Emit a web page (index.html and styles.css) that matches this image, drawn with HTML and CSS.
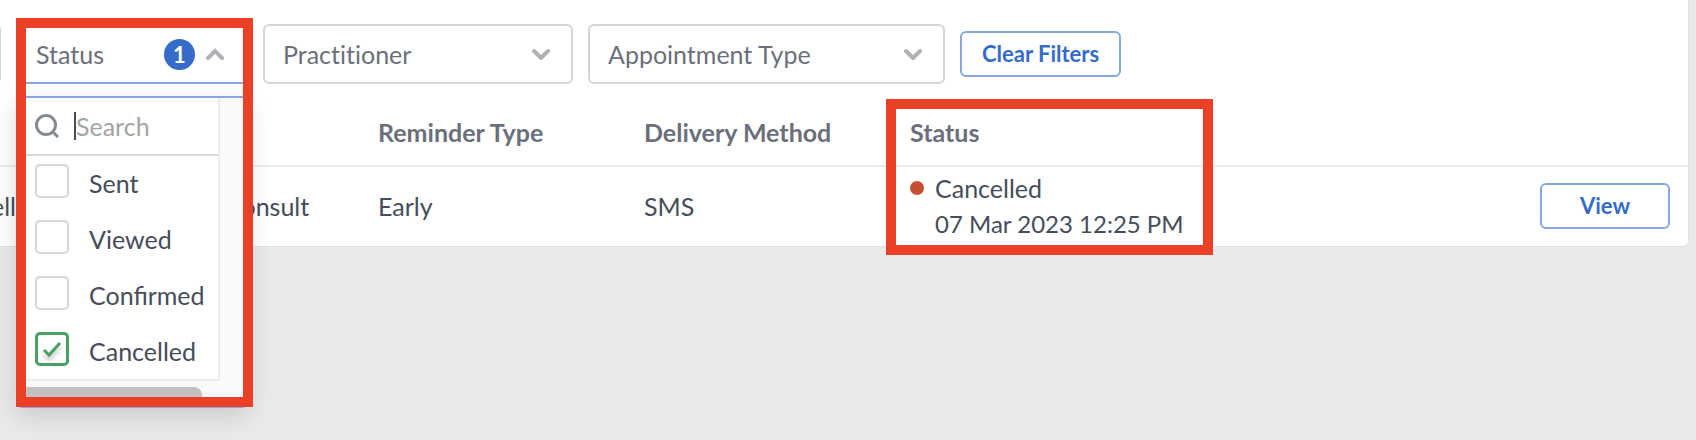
FILE: index.html
```
<!DOCTYPE html>
<html lang="en">
<head>
    <meta charset="UTF-8">
    <meta name="viewport" content="width=device-width, initial-scale=1.0">
    <title>Reminders</title>
    <link rel="stylesheet" href="styles.css">
</head>
<body>
    <main class="card">
        <div class="filters">
            <div class="filter filter-edge"></div>

            <div class="dropdown">
                <button type="button" class="filter filter-open" aria-expanded="true" aria-controls="statusPanel">
                    <span>Status</span>
                    <span class="count">1</span>
                    <svg class="chevron" viewBox="0 0 18 12" aria-hidden="true"><path d="M2 10 L9 3 L16 10"/></svg>
                </button>
                <div class="panel" id="statusPanel">
                    <div class="panel-list">
                        <label class="search">
                            <svg viewBox="0 0 24 24" aria-hidden="true"><circle cx="11" cy="11" r="9.5"/><path d="M18 18 L23 23"/></svg>
                            <input type="text" class="search-input" placeholder="Search">
                        </label>
                        <div class="options">
                            <label class="option"><input type="checkbox"><span>Sent</span></label>
                            <label class="option"><input type="checkbox"><span>Viewed</span></label>
                            <label class="option"><input type="checkbox"><span>Confirmed</span></label>
                            <label class="option">
                                <input type="checkbox" checked>
                                <svg class="tick" viewBox="0 0 34 34" aria-hidden="true"><path d="M9 18 L14 23 L25 11"/></svg>
                                <span>Cancelled</span>
                            </label>
                        </div>
                    </div>
                    <div class="scroll-thumb"></div>
                </div>
            </div>

            <label class="select select-practitioner">
                <select class="filter" aria-label="Practitioner"><option>Practitioner</option></select>
                <svg class="chevron" viewBox="0 0 18 12" aria-hidden="true"><path d="M2 3 L9 10 L16 3"/></svg>
            </label>

            <label class="select select-type">
                <select class="filter" aria-label="Appointment Type"><option>Appointment Type</option></select>
                <svg class="chevron" viewBox="0 0 18 12" aria-hidden="true"><path d="M2 3 L9 10 L16 3"/></svg>
            </label>

            <button type="button" class="btn">Clear Filters</button>
        </div>

        <table class="reminders">
            <colgroup>
                <col class="col-name">
                <col class="col-appointment">
                <col class="col-data">
                <col class="col-data">
                <col class="col-status">
                <col>
            </colgroup>
            <thead>
                <tr>
                    <th></th>
                    <th></th>
                    <th>Reminder Type</th>
                    <th>Delivery Method</th>
                    <th>Status</th>
                    <th></th>
                </tr>
            </thead>
            <tbody>
                <tr>
                    <td class="cut">ell</td>
                    <td>Consult</td>
                    <td>Early</td>
                    <td>SMS</td>
                    <td>
                        <div class="status">
                            <span class="dot"></span>
                            <div>
                                <div>Cancelled</div>
                                <div class="date">07 Mar 2023 12:25 PM</div>
                            </div>
                        </div>
                    </td>
                    <td class="actions"><button type="button" class="btn btn-view">View</button></td>
                </tr>
            </tbody>
        </table>

        <!-- Red callouts over the filter and the status column -->
        <div class="callout callout-filter"></div>
        <div class="callout callout-status"></div>
    </main>
</body>
</html>
```

FILE: styles.css
```
* {
    box-sizing: border-box;
}

body {
    margin: 0;
    min-height: 100vh;
    background: #e9eaec;
    color: #464c59;
    font-family: Lato, sans-serif;
    font-size: 25px;
    line-height: 36px;
}

button, input, select {
    font: inherit;
    color: inherit;
}

.card {
    position: relative;
    margin-right: 7px;
    background: #fff;
    border-right: 1px solid #dfe0e2;
    border-bottom: 1px solid #dfe0e2;
    border-bottom-right-radius: 6px;
}

/* Filters */
.filters {
    display: flex;
    align-items: center;
    gap: 15px;
    padding-top: 24px;
}

.filter {
    display: flex;
    align-items: center;
    width: 100%;
    height: 60px;
    padding: 0 22px 0 18px;
    background: #fff;
    border: 2px solid #d5d6da;
    border-radius: 6px;
    color: #6b6f7b;
    text-align: left;
}

/* Previous filter, only its right side is in view */
.filter-edge {
    width: 40px;
    padding: 0;
    margin-left: -39px;
}

.filter-open {
    border-color: #86a7e0;
}

.dropdown {
    position: relative;
    width: 232px;
}

.count {
    width: 31px;
    height: 31px;
    margin-left: auto;
    margin-right: 11px;
    border-radius: 50%;
    background: #356bc9;
    color: #fff;
    font-size: 22px;
    font-weight: bold;
    line-height: 31px;
    text-align: center;
}

.chevron {
    width: 18px;
    height: 12px;
    fill: none;
    stroke: #b0b1b7;
    stroke-width: 4;
    stroke-linecap: round;
}

.select {
    display: grid;
    align-items: center;
}

.select > * {
    grid-area: 1 / 1;
}

.select .filter {
    appearance: none;
    font-variant-ligatures: none;
}

.select .chevron {
    justify-self: end;
    margin-right: 23px;
    pointer-events: none;
}

.select-practitioner {
    width: 310px;
}

.select-type {
    width: 357px;
}

.btn {
    height: 46px;
    padding: 0 20px;
    background: #fff;
    border: 2px solid #86a7e0;
    border-radius: 6px;
    color: #356bc9;
    font-size: 22px;
    font-weight: bold;
    line-height: 36px;
}

.btn-view {
    width: 130px;
}

/* Open status panel */
.panel {
    position: absolute;
    z-index: 1;
    top: 72px;
    left: 0;
    width: 100%;
    height: 312px;
    background: #fafafa;
    border: 2px solid #86a7e0;
    border-radius: 6px;
    box-shadow: 0 8px 24px rgba(0, 0, 0, 0.14);
    overflow: hidden;
}

.panel-list {
    width: 202px;
    background: #fff;
    border-right: 2px solid #ececee;
    border-bottom: 2px solid #ececee;
}

.search {
    display: flex;
    align-items: center;
    gap: 15px;
    height: 58px;
    padding-left: 17px;
    border-bottom: 2px solid #d8d8da;
}

.search svg {
    flex: none;
    width: 24px;
    height: 24px;
    fill: none;
    stroke: #868a93;
    stroke-width: 3;
}

.search-input {
    width: 110px;
    height: 28px;
    padding: 0;
    border: 0;
    border-left: 2px solid #464c59;
    outline: none;
}

.search-input::placeholder {
    color: #a3a3a3;
}

.options {
    display: grid;
    gap: 22px;
    padding: 8px 0 13px 17px;
}

.option {
    display: grid;
    grid-template-columns: 34px 1fr;
    column-gap: 20px;
    height: 34px;
}

.option input {
    grid-area: 1 / 1;
    appearance: none;
    width: 34px;
    height: 34px;
    margin: 0;
    border: 2px solid #d5d6da;
    border-radius: 5px;
}

.option input:checked {
    border: 3px solid #46a163;
}

.option span {
    grid-area: 1 / 2;
    padding-top: 1px;
}

.tick {
    grid-area: 1 / 1;
    width: 34px;
    height: 34px;
    fill: none;
    stroke: #46a163;
    stroke-width: 3;
    filter: drop-shadow(0 4px 2px rgba(0, 0, 0, 0.25));
}

.scroll-thumb {
    width: 184px;
    height: 16px;
    margin-top: 6px;
    border-radius: 8px;
    background: #c1c1c1;
}

/* Table */
.reminders {
    width: 100%;
    table-layout: fixed;
    border-collapse: collapse;
}

.col-name {
    width: 225px;
}

.col-appointment {
    width: 153px;
}

.col-data {
    width: 266px;
}

.col-status {
    width: 320px;
}

th {
    height: 82px;
    padding: 14px 0 0;
    border-bottom: 2px solid #e9eaec;
    color: #6b6f7b;
    text-align: left;
}

td {
    height: 80px;
    padding: 0 0 2px;
    white-space: nowrap;
}

.cut {
    text-indent: -9px;
}

.status {
    display: flex;
    gap: 11px;
}

.date {
    font-size: 24px;
}

.dot {
    width: 14px;
    height: 14px;
    margin-top: 11px;
    border-radius: 50%;
    background: #c54f35;
}

.actions {
    padding-right: 18px;
    text-align: right;
}

/* Callouts */
.callout {
    position: absolute;
    z-index: 2;
    border: 10px solid #eb4026;
    pointer-events: none;
}

.callout-filter {
    top: 18px;
    left: 16px;
    width: 237px;
    height: 389px;
}

.callout-status {
    top: 99px;
    left: 886px;
    width: 327px;
    height: 156px;
}
```
